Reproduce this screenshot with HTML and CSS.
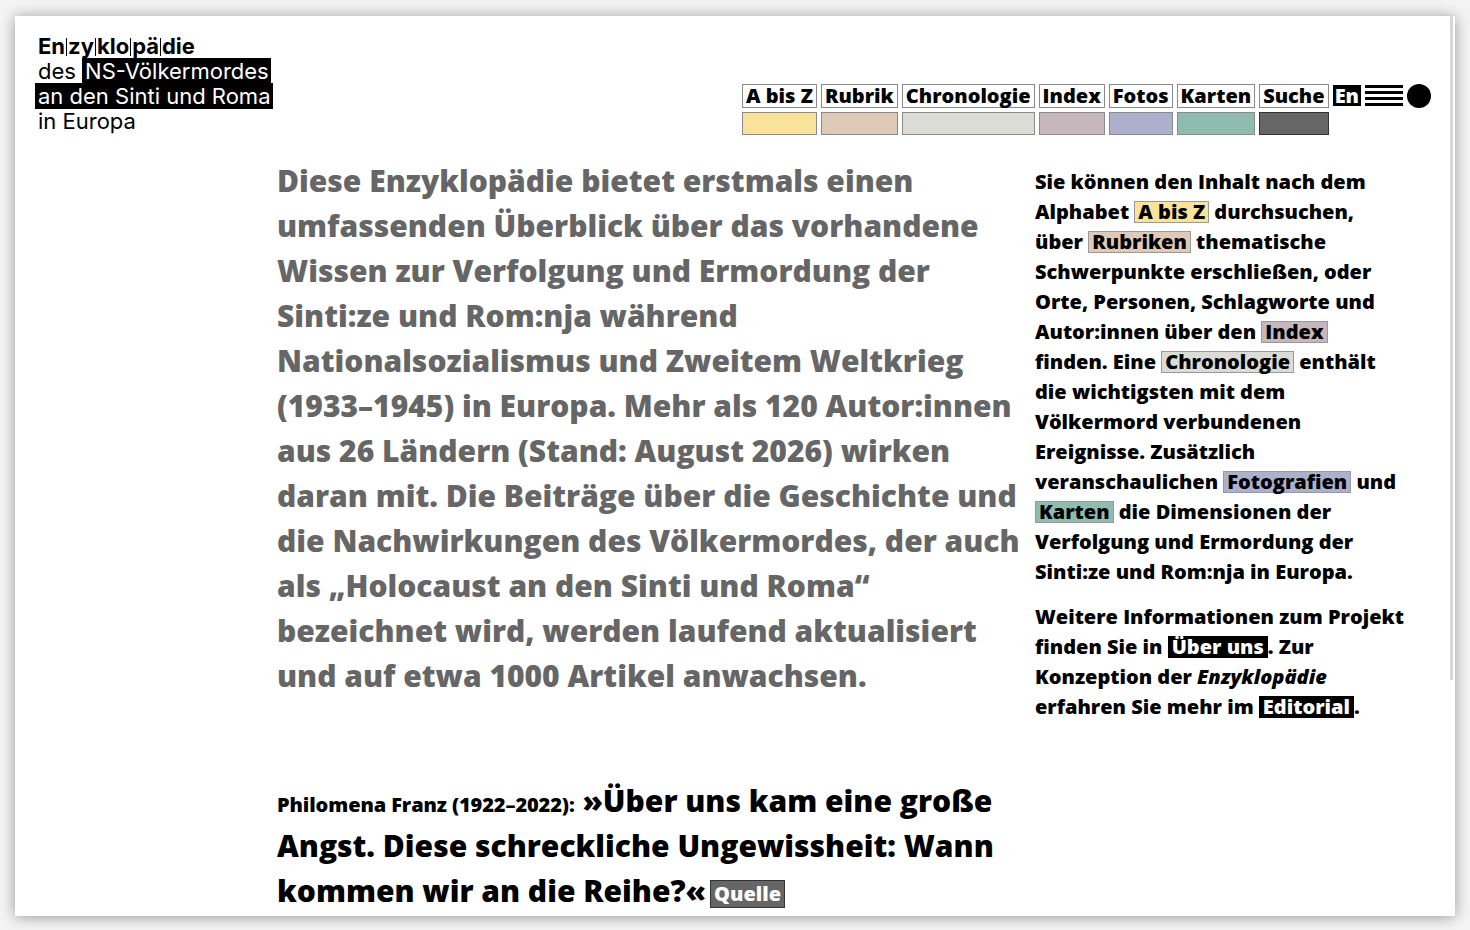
FILE: index.html
```html
<!DOCTYPE html>
<html lang="de">
<head>
<meta charset="utf-8">
<title>Enzyklopädie des NS-Völkermordes an den Sinti und Roma in Europa</title>
<link rel="stylesheet" href="styles.css">
</head>
<body>
<div class="page">
  <header class="header">
    <div class="logo">
      <div class="logo-title">En<span class="sep"></span>zy<span class="sep"></span>klo<span class="sep"></span>pä<span class="sep"></span>die</div>
      <div class="logo-line">des <span class="inv">NS-Völkermordes</span></div>
      <div class="logo-line"><span class="inv inv-full">an den Sinti und Roma</span></div>
      <div class="logo-line">in Europa</div>
    </div>
    <nav class="nav">
      <div class="nav-item"><span class="nav-label">A bis Z</span><span class="swatch c-az"></span></div>
      <div class="nav-item"><span class="nav-label">Rubrik</span><span class="swatch c-rubrik"></span></div>
      <div class="nav-item"><span class="nav-label">Chronologie</span><span class="swatch c-chrono"></span></div>
      <div class="nav-item"><span class="nav-label">Index</span><span class="swatch c-index"></span></div>
      <div class="nav-item"><span class="nav-label">Fotos</span><span class="swatch c-fotos"></span></div>
      <div class="nav-item"><span class="nav-label">Karten</span><span class="swatch c-karten"></span></div>
      <div class="nav-item"><span class="nav-label">Suche</span><span class="swatch c-suche"></span></div>
      <div class="nav-item"><span class="nav-lang">En</span></div>
      <div class="nav-item nav-burger" aria-label="Menü"><span></span><span></span><span></span><span></span></div>
      <div class="nav-item"><span class="nav-dot"></span></div>
    </nav>
  </header>

  <main class="content">
    <div class="main-col">
      <p class="intro">Diese Enzyklopädie bietet erstmals einen umfassenden Überblick über das vorhandene Wissen zur Verfolgung und Ermordung der Sinti:ze und Rom:nja während Nationalsozialismus und Zweitem Weltkrieg (1933–1945) in Europa. Mehr als 120 Autor:innen aus 26 Ländern (Stand: August 2026) wirken daran mit. Die Beiträge über die Geschichte und die Nachwirkungen des Völkermordes, der auch als „Holocaust an den Sinti und Roma“ bezeichnet wird, werden laufend aktualisiert und auf etwa 1000 Artikel anwachsen.</p>
      <p class="quote"><span class="quote-author">Philomena Franz (1922–2022):</span> »Über uns kam eine große Angst. Diese schreckliche Ungewissheit: Wann kommen wir an die Reihe?«<span class="quote-src">Quelle</span></p>
    </div>
    <aside class="side-col">
      <p>Sie können den Inhalt nach dem Alphabet <span class="tag c-az">A bis Z</span> durchsuchen, über <span class="tag c-rubrik">Rubriken</span> thematische Schwerpunkte erschließen, oder Orte, Personen, Schlagworte und Autor:innen über den <span class="tag c-index">Index</span> finden. Eine <span class="tag c-chrono">Chronologie</span> enthält die wichtigsten mit dem Völkermord verbundenen Ereignisse. Zusätzlich veranschaulichen <span class="tag c-fotos">Fotografien</span> und <span class="tag c-karten">Karten</span> die Dimensionen der Verfolgung und Ermordung der Sinti:ze und Rom:nja in Europa.</p>
      <p>Weitere Informationen zum Projekt finden Sie in <span class="tag tag-dark">Über uns</span>. Zur Konzeption der <em>Enzyklopädie</em> erfahren Sie mehr im <span class="tag tag-dark">Editorial</span>.</p>
    </aside>
  </main>
  <div class="scrollbar"></div>
</div>
</body>
</html>
```

FILE: styles.css
```css
html, body {
  margin: 0;
  padding: 0;
  background: #f4f4f4;
}

body {
  width: 1470px;
  height: 930px;
  overflow: hidden;
  font-family: "Open Sans", "Noto Sans", sans-serif;
  color: #000;
}

.page {
  position: relative;
  width: 1440px;
  height: 900px;
  margin: 16px 15px 14px;
  background: #fff;
  overflow: hidden;
  box-shadow: 0 1px 14px rgba(0, 0, 0, 0.38);
}

/* header */
.header {
  display: flex;
  justify-content: space-between;
  align-items: flex-start;
  padding: 18px 24px 0 20px;
}

.logo {
  font-family: Inter, "Liberation Sans", sans-serif;
  font-size: 22px;
  line-height: 25px;
  padding-left: 3px;
}

.logo-title {
  font-weight: 700;
  display: flex;
  align-items: center;
}

.logo-title .sep {
  display: inline-block;
  width: 1px;
  height: 18px;
  background: #000;
  margin: 0 1px;
}

.logo-line {
  font-weight: 400;
}

.inv {
  background: #000;
  color: #fff;
  padding: 0 2px 0 3px;
}

.inv-full {
  margin-left: -3px;
}

/* nav */
.nav {
  display: flex;
  gap: 4px;
  margin-top: 50px;
  align-items: flex-start;
}

.nav-item {
  display: flex;
  flex-direction: column;
  gap: 4px;
}

.nav-label {
  display: block;
  border: 1px solid #8a8a8a;
  font-size: 20px;
  font-weight: 800;
  line-height: 22px;
  padding: 0 3px;
  white-space: nowrap;
}

.swatch {
  display: block;
  height: 21px;
  border: 1px solid #8a8a8a;
}

.nav-lang {
  display: block;
  margin-top: 1px;
  background: #000;
  color: #fff;
  font-size: 20px;
  font-weight: 800;
  line-height: 21px;
  padding: 0 2px;
}

.nav-burger {
  width: 38px;
  margin-top: 1px;
  gap: 3px;
}

.nav-burger span {
  display: block;
  height: 3px;
  background: #000;
}

.nav-dot {
  display: block;
  width: 24px;
  height: 24px;
  border-radius: 50%;
  background: #000;
}

.c-az { background: #f9e39b; }
.c-rubrik { background: #dfc9b7; }
.c-chrono { background: #dcdcd6; }
.c-index { background: #c5b7bc; }
.c-fotos { background: #adb0cd; }
.c-karten { background: #90bcaf; }
.c-suche { background: #666; border-color: #333; }

/* content */
.content {
  display: grid;
  grid-template-columns: 745px 369px;
  column-gap: 13px;
  padding: 23px 0 0 262px;
}

.main-col p {
  margin: 0;
}

.intro {
  font-size: 30px;
  font-weight: 800;
  line-height: 45px;
  color: #666;
}

.quote {
  margin-top: 80px !important;
  font-size: 30px;
  font-weight: 800;
  line-height: 45px;
  color: #000;
}

.quote-author {
  font-size: 20px;
  line-height: 20px;
  letter-spacing: -0.1px;
}

.quote-src {
  display: inline-block;
  margin-left: 4px;
  background: #666;
  color: #fff;
  font-size: 20px;
  line-height: 26px;
  padding: 0 3px;
  border: 1px solid #333;
  vertical-align: 1px;
}

.side-col {
  padding-top: 9px;
  font-size: 20px;
  font-weight: 800;
  line-height: 30px;
}

.side-col p {
  margin: 0 0 15px;
}

.side-col em {
  font-style: italic;
}

.tag {
  display: inline-block;
  border: 1px solid #999;
  padding: 0 3px;
  line-height: 20px;
}

.tag-dark {
  background: #000;
  color: #fff;
  border-color: #000;
}

.scrollbar {
  position: absolute;
  top: 0;
  right: 2px;
  width: 3px;
  height: 664px;
  background: #d6d6d6;
}
```
